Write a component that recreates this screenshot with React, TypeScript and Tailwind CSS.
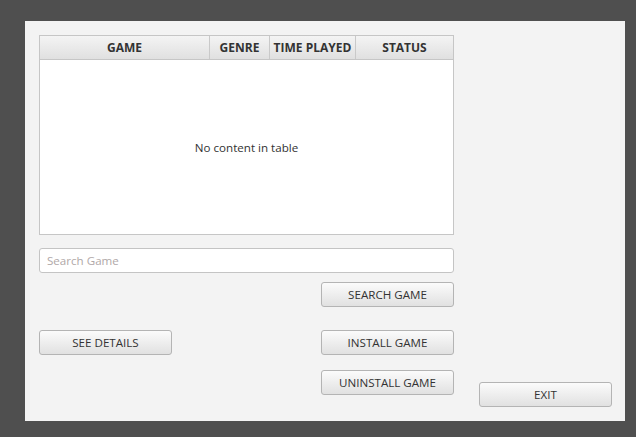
import React from "react";

const font = { fontFamily: '"Open Sans", "Noto Sans", sans-serif' };

function Btn({ label, className = "" }: { label: string; className?: string }) {
  return (
    <button
      className={`h-[25px] w-[133px] rounded-[3px] border border-[#b4b4b4] bg-gradient-to-b from-[#fbfbfb] to-[#e1e1e1] text-[11.6px] text-[#333333] leading-none ${className}`}
    >
      {label}
    </button>
  );
}

export default function App() {
  return (
    <div
      className="w-[636px] h-[437px] bg-[#4f4f4f] pt-[21px] pl-[25px]"
      style={font}
    >
      <div className="w-[600px] h-[400px] bg-[#f3f3f3] flex pl-[14px] pt-[14px] pb-[14px]">
        <div className="w-[415px] flex flex-col">
          <div className="h-[200px] border border-[#c6c6c6] bg-white flex flex-col">
            <div className="h-[24px] flex border-b border-[#c6c6c6] bg-gradient-to-b from-[#f4f4f4] to-[#e0e0e0] text-[12px] font-bold text-[#333333]">
              <div className="w-[170px] border-r border-[#c9c9c9] flex items-center justify-center pt-[1px]">GAME</div>
              <div className="w-[60px] border-r border-[#c9c9c9] flex items-center justify-center pt-[1px]">GENRE</div>
              <div className="w-[86px] border-r border-[#c9c9c9] flex items-center justify-center pt-[1px]">TIME PLAYED</div>
              <div className="flex-1 flex items-center justify-center pt-[1px]">STATUS</div>
            </div>
            <div className="flex-1 flex items-center justify-center pt-[1px] text-[11.6px] text-[#333333]">
              No content in table
            </div>
          </div>
          <input
            placeholder="Search Game"
            className="mt-[13px] h-[25px] w-full rounded-[3px] border border-[#c4c4c4] bg-white px-[7px] text-[11.6px] text-[#333] placeholder:text-[#b0a8a8] outline-none"
            style={font}
          />
          <div className="mt-[9px] flex justify-end">
            <Btn label="SEARCH GAME" />
          </div>
          <div className="mt-[23px] flex justify-between">
            <Btn label="SEE DETAILS" />
            <Btn label="INSTALL GAME" />
          </div>
          <div className="mt-[15px] flex justify-end">
            <Btn label="UNINSTALL GAME" />
          </div>
        </div>
        <div className="ml-[25px] flex flex-col justify-end">
          <Btn label="EXIT" />
        </div>
      </div>
    </div>
  );
}
